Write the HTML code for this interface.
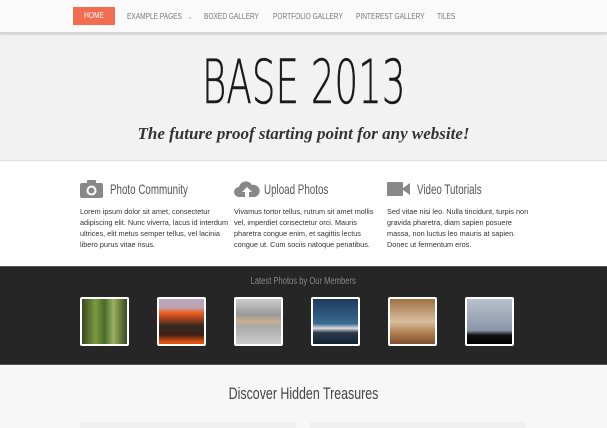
<!DOCTYPE html>
<html><head><meta charset="utf-8"><style>
*{margin:0;padding:0;box-sizing:border-box}
body{width:607px;height:427px;overflow:hidden;background:#f7f7f7;font-family:"Liberation Sans",sans-serif;position:relative}
.n{display:inline-block;transform-origin:0 50%}
.nav{position:absolute;left:0;top:0;width:607px;height:34px;background:#fafafa;border-bottom:2px solid #d6d6d6;box-shadow:0 1px 3px rgba(0,0,0,.15)}
.nav>span{position:absolute;top:12px;font-size:8px;color:#777;transform:scaleX(.82);transform-origin:0 50%;white-space:nowrap}
.home{position:absolute;left:73px;top:7px;width:42px;height:18px;background:#f26c4f;color:#fff;font-size:8px;text-align:center;line-height:18px}
.hdr{position:absolute;left:0;top:36px;width:607px;height:125px;background:#f2f2f2;border-bottom:1px solid #e2e2e2}
.title{position:absolute;left:0;top:48px;width:607px;text-align:center;font-family:"DejaVu Sans",sans-serif;font-weight:200;font-size:61px;color:#1a1a1a;line-height:70px;-webkit-text-stroke:0.5px #1a1a1a}
.title span{display:inline-block;transform:scaleX(.61)}
.tag{position:absolute;left:0;top:124px;width:607px;text-align:center;font-family:"Liberation Serif",serif;font-style:italic;font-weight:bold;font-size:17px;color:#333}
.feat{position:absolute;left:0;top:162px;width:607px;height:105px;background:#fff}
.col{position:absolute;top:180px;width:150px}
.col h3{font-weight:normal;font-size:14px;color:#555;height:18px;padding-left:30px;line-height:18px;white-space:nowrap}
.col h3 span{display:inline-block;transform:scaleX(.7);transform-origin:0 50%}
.col p{margin-top:8px;font-size:7.3px;line-height:11px;color:#333}
.ic{position:absolute;left:0;top:0}
.dark{position:absolute;left:0;top:266px;width:607px;height:99px;background:#262626;border-top:1px solid #555;border-bottom:1px solid #555}
.lp{position:absolute;left:0;top:276px;width:607px;text-align:center;color:#888;font-size:10px}
.lp span,.disc span{display:inline-block;transform:scaleX(.76)}
.th{position:absolute;top:297px;width:49px;height:49px;border:2px solid #fff;border-radius:2px}
.disc{position:absolute;left:0;top:384px;width:607px;text-align:center;font-size:17px;color:#444}
.disc span{transform:scaleX(.73)}
.bx{position:absolute;top:422px;height:6px;width:216px;background:#efefef}
</style></head><body>
<div class="nav">
<div class="home"><span class="n" style="transform:scaleX(.82);transform-origin:50% 50%">HOME</span></div>
<span style="left:127px">EXAMPLE PAGES &nbsp;&nbsp;<span style="color:#aaa">⌄</span></span>
<span style="left:204px">BOXED GALLERY</span>
<span style="left:273px">PORTFOLIO GALLERY</span>
<span style="left:356px">PINTEREST GALLERY</span>
<span style="left:437px">TILES</span>
</div>
<div class="hdr"></div>
<div class="title"><span>BASE 2013</span></div>
<div class="tag">The future proof starting point for any website!</div>
<div class="feat"></div>
<div class="col" style="left:80px"><svg class="ic" width="23" height="18" viewBox="0 0 23 18"><rect x="0" y="3" width="23" height="15" rx="2" fill="#888"/><rect x="7" y="0" width="9" height="5" rx="1" fill="#888"/><circle cx="11.5" cy="10.5" r="5" fill="#fff"/><circle cx="11.5" cy="10.5" r="3" fill="#888"/></svg><h3><span>Photo Community</span></h3><p>Lorem ipsum dolor sit amet, consectetur adipiscing elit. Nunc viverra, lacus id interdum ultrices, elit metus semper tellus, vel lacinia libero purus vitae risus.</p></div>
<div class="col" style="left:234px"><svg class="ic" width="26" height="18" viewBox="0 0 26 18"><path d="M5 17a5 5 0 0 1 0-10a7 7 0 0 1 13-2a5 5 0 0 1 3 12z" fill="#888"/><path d="M13 7l-5 5h3v5h4v-5h3z" fill="#fff"/></svg><h3><span>Upload Photos</span></h3><p>Vivamus tortor tellus, rutrum sit amet mollis vel, imperdiet consectetur orci. Mauris pharetra congue enim, et sagittis lectus congue ut. Cum sociis natoque penatibus.</p></div>
<div class="col" style="left:387px"><svg class="ic" width="24" height="18" viewBox="0 0 24 18"><rect x="0" y="2" width="16" height="14" rx="1" fill="#888"/><path d="M16 8l7-5v12l-7-5z" fill="#888"/></svg><h3><span>Video Tutorials</span></h3><p>Sed vitae nisi leo. Nulla tincidunt, turpis non gravida pharetra, diam sapien posuere massa, non luctus leo mauris at sapien. Donec ut fermentum eros.</p></div>
<div class="dark"></div>
<div class="lp"><span>Latest Photos by Our Members</span></div>
<div class="th" style="left:80px;background:linear-gradient(90deg,#3a4a20,#7a9a40 30%,#4a6a2a 50%,#9ab060 70%,#3a4a20)"></div>
<div class="th" style="left:157px;background:linear-gradient(180deg,#b8a8c0 0%,#c0a0b0 20%,#f06020 30%,#a04020 45%,#302820 60%,#402018 80%,#e05010 95%)"></div>
<div class="th" style="left:234px;background:linear-gradient(180deg,#ccc,#999 35%,#c8b090 50%,#aaa 60%,#ccc)"></div>
<div class="th" style="left:311px;background:linear-gradient(180deg,#1d3a5e,#3a6a90 55%,#ddd 65%,#2a3a4a 75%,#123)"></div>
<div class="th" style="left:388px;background:linear-gradient(180deg,#a07040,#d8c0a0 50%,#b08050 75%,#805030)"></div>
<div class="th" style="left:465px;background:linear-gradient(180deg,#b8c0cc,#8a96a8 70%,#111 80%,#000)"></div>
<div class="disc"><span>Discover Hidden Treasures</span></div>
<div class="bx" style="left:80px"></div>
<div class="bx" style="left:310px"></div>
</body></html>
